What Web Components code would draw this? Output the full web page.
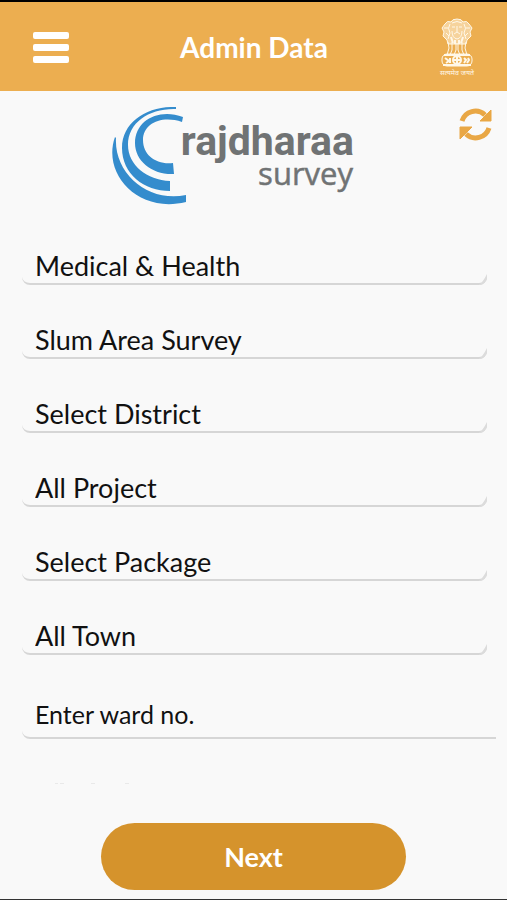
<!DOCTYPE html>
<html lang="en">
<head>
<meta charset="utf-8">
<meta name="viewport" content="width=device-width, initial-scale=1">
<title>Admin Data</title>
<style>
  :root {
    --amber: #ecae50;
    --amber-dark: #d5932c;
    --page: #f9f9f9;
    --line: #d6d6d6;
  }

  body {
    margin: 0;
    background: var(--page);
    color: #111;
    font-family: Lato, "Noto Sans", sans-serif;
  }
</style>
</head>
<body>
<survey-app>
  <app-header slot="header">Admin Data</app-header>
  <survey-logo slot="brand"></survey-logo>
  <refresh-button slot="brand"></refresh-button>
  <select-field label="Department" value="Medical &amp; Health"></select-field>
  <select-field label="Survey" value="Slum Area Survey"></select-field>
  <select-field label="District" value="Select District"></select-field>
  <select-field label="Project" value="All Project"></select-field>
  <select-field label="Package" value="Select Package"></select-field>
  <select-field label="Town" value="All Town"></select-field>
  <text-field label="Ward number" placeholder="Enter ward no."></text-field>
  <pill-button slot="footer">Next</pill-button>
</survey-app>

<script>
function attach(el, html) {
  const template = document.createElement("template");
  template.innerHTML = html;
  el.attachShadow({ mode: "open" }).appendChild(template.content.cloneNode(true));
}

class SurveyApp extends HTMLElement {
  constructor() {
    super();
    attach(this, `
      <style>
        :host {
          display: flex;
          flex-direction: column;
          box-sizing: border-box;
          min-height: 100vh;
          border-top: 2px solid #000;
          border-bottom: 1px solid #333;
        }
        .brand {
          display: grid;
          grid-template-columns: 1fr auto 1fr;
          align-items: start;
          padding: 16px 14px 0 0;
        }
        ::slotted(survey-logo) { grid-column: 2; margin-right: 28px; }
        ::slotted(refresh-button) { justify-self: end; }
        form {
          display: flex;
          flex-direction: column;
          gap: 28px;
          padding: 34px 20px 0 22px;
        }
        .fade { display: block; margin: 43px 0 0 54px; }
        footer {
          display: flex;
          justify-content: center;
          margin-top: auto;
          padding: 16px 0 9px;
        }
      </style>
      <slot name="header"></slot>
      <div class="brand"><slot name="brand"></slot></div>
      <form><slot></slot></form>
      <!-- tips of the next field, cut by the scroll edge -->
      <svg class="fade" width="78" height="2" viewBox="0 0 78 2" fill="#e9e9e9" aria-hidden="true">
        <path d="M1 1h3v1h-3zM6 1h4v1h-4zM37 1h4v1h-4zM71 1h4v1h-4z"/>
      </svg>
      <footer><slot name="footer"></slot></footer>
    `);
  }
}

class AppHeader extends HTMLElement {
  constructor() {
    super();
    attach(this, `
      <style>
        :host { display: block; }
        header {
          display: grid;
          grid-template-columns: 1fr auto 1fr;
          align-items: center;
          height: 89px;
          padding: 0 32px 0 33px;
          background: var(--amber);
          color: #fff;
        }
        h1 { margin: 0; font-size: 28px; line-height: 32px; font-weight: 700; }
        button {
          justify-self: start;
          padding: 0;
          border: 0;
          background: none;
          color: inherit;
          cursor: pointer;
        }
        svg { display: block; }
        .emblem { justify-self: end; }
      </style>
      <header>
        <button type="button" aria-label="Menu">
          <svg width="36" height="32" viewBox="0 0 36 32" fill="currentColor">
            <rect y="1" width="36" height="7" rx="2"/>
            <rect y="13" width="36" height="7" rx="2"/>
            <rect y="25" width="36" height="7" rx="2"/>
          </svg>
        </button>
        <h1><slot></slot></h1>
        <svg class="emblem" width="36" height="60" viewBox="0 0 36 60" fill="none" stroke="#fff8e8" aria-hidden="true">
          <!-- lions -->
          <path d="M12 5q1-3 6-3t6 3q4-2 6 2l3 4-2 4 1 4-4 4-1 4H9l-1-4-4-4 1-4-2-4 3-4q2-4 6-2z" fill="#fff8e8" fill-opacity=".5"/>
          <path d="M11 7q-3 4 0 9l-2 6M25 7q3 4 0 9l2 6M13 6q5-3 10 0M13 10h3M20 10h3M18 9v6l-3 2M18 15l3 2M13 14q0 7 5 8 5-1 5-8M5 11h4M31 11h-4M7 16l3 3M29 16l-3 3" />
          <path d="M12 20l2 6M24 20l-2 6M16 23v4M20 23v4" stroke-width="2"/>
          <!-- legs -->
          <path d="M9 25l1 6-2 7M13 25v8l-2 5M17 26v7l-2 5M19 26v7l2 5M23 25v8l2 5M27 25l-1 6 2 7"/>
          <!-- drum with the wheel -->
          <path d="M5 38h26M4 48h28" stroke-width="2"/>
          <rect x="3" y="37" width="30" height="12" rx="5"/>
          <circle cx="18" cy="43" r="4" stroke-width="2"/>
          <path d="M18 40v6M15 43h6M6 41l4 3-3 2M11 41v5M25 41l2 2-2 3M29 41l1 2-2 3" stroke-width="2"/>
          <text x="18" y="58" text-anchor="middle" font-size="7" stroke="none" fill="#fff8e8" font-family="Noto Sans, FreeSans, sans-serif">सत्यमेव जयते</text>
        </svg>
      </header>
    `);
  }
}

class SurveyLogo extends HTMLElement {
  constructor() {
    super();
    attach(this, `
      <style>
        :host { display: block; }
        svg { display: block; }
      </style>
      <svg width="243" height="98" viewBox="0 0 243 98" role="img" aria-label="rajdharaa survey">
        <g fill="#348ccd">
          <path d="M72 10C48 1 24 13 24 36C24 54 41 68 63 67L62 56C45 58 32 48 32 33C32 17 50 8 71 15Z"/>
          <path d="M65 0C36-1 11 15 11 41C11 67 33 84 59 84V74C36 73 17 58 17 38C17 15 39 1 65 2Z"/>
          <path d="M4 30C-9 66 26 107 75 95V88C38 96 3 67 5 31Z"/>
        </g>
        <g fill="#707374" text-anchor="end">
          <text x="243" y="48" font-family="Roboto, sans-serif" font-size="41" font-weight="700">rajdharaa</text>
          <text x="242" y="78" font-family="Open Sans, sans-serif" font-size="31" stroke="#707374" stroke-width=".5">survey</text>
        </g>
      </svg>
    `);
  }
}

class RefreshButton extends HTMLElement {
  constructor() {
    super();
    attach(this, `
      <style>
        :host { display: block; }
        button {
          display: block;
          padding: 0;
          border: 0;
          background: none;
          color: #e9a745;
          cursor: pointer;
        }
        svg { display: block; }
      </style>
      <button type="button" aria-label="Refresh">
        <svg width="35" height="35" viewBox="0 0 35 35">
          <path d="M4 14A14 14 0 0 1 27 8M31 21A14 14 0 0 1 8 27" fill="none" stroke="currentColor" stroke-width="5"/>
          <path d="M33 3V14H22zM2 32V20H14z" fill="currentColor" stroke="currentColor" stroke-linejoin="round"/>
        </svg>
      </button>
    `);
  }
}

class SelectField extends HTMLElement {
  constructor() {
    super();
    attach(this, `
      <style>
        :host { display: block; }
        .box {
          display: flex;
          position: relative;
          height: 46px;
        }
        .box::before {
          content: "";
          position: absolute;
          inset: 0;
          border-bottom: 2px solid var(--line);
          border-radius: 0 0 8px 8px;
          pointer-events: none;
        }
        select {
          flex: 1;
          appearance: none;
          padding: 10px 13px 2px;
          border: 0;
          background: none;
          color: inherit;
          font: 27px/32px Lato, sans-serif;
        }
        svg { position: absolute; right: 0; bottom: 0; pointer-events: none; }
      </style>
      <div class="box">
        <select></select>
        <svg width="8" height="12" viewBox="0 0 8 12" aria-hidden="true">
          <path d="M8 1v5q-2 5-7 6h-1q4-3 8-11z" fill="#dcdcdc"/>
        </svg>
      </div>
    `);
  }

  connectedCallback() {
    const select = this.shadowRoot.querySelector("select");
    select.setAttribute("aria-label", this.getAttribute("label"));
    select.replaceChildren(new Option(this.getAttribute("value")));
  }
}

class TextField extends HTMLElement {
  constructor() {
    super();
    attach(this, `
      <style>
        /* runs past the form's right padding */
        :host { display: block; margin-right: -9px; }
        input {
          display: block;
          box-sizing: border-box;
          width: 100%;
          height: 56px;
          padding: 10px 13px 2px;
          border: 0;
          border-bottom: 2px solid var(--line);
          border-radius: 0 0 0 8px;
          background: none;
          color: inherit;
          font: 25px/32px Lato, sans-serif;
        }
        input::placeholder { color: inherit; opacity: 1; }
      </style>
      <input type="text">
    `);
  }

  connectedCallback() {
    const input = this.shadowRoot.querySelector("input");
    input.placeholder = this.getAttribute("placeholder");
    input.setAttribute("aria-label", this.getAttribute("label"));
  }
}

class PillButton extends HTMLElement {
  constructor() {
    super();
    attach(this, `
      <style>
        :host { display: block; width: 60%; }
        button {
          display: block;
          width: 100%;
          height: 67px;
          border: 0;
          border-radius: 34px;
          background: var(--amber-dark);
          color: #fff;
          font: 700 27px/32px Lato, sans-serif;
          cursor: pointer;
        }
      </style>
      <button type="button"><slot></slot></button>
    `);
  }
}

customElements.define("survey-app", SurveyApp);
customElements.define("app-header", AppHeader);
customElements.define("survey-logo", SurveyLogo);
customElements.define("refresh-button", RefreshButton);
customElements.define("select-field", SelectField);
customElements.define("text-field", TextField);
customElements.define("pill-button", PillButton);
</script>
</body>
</html>
